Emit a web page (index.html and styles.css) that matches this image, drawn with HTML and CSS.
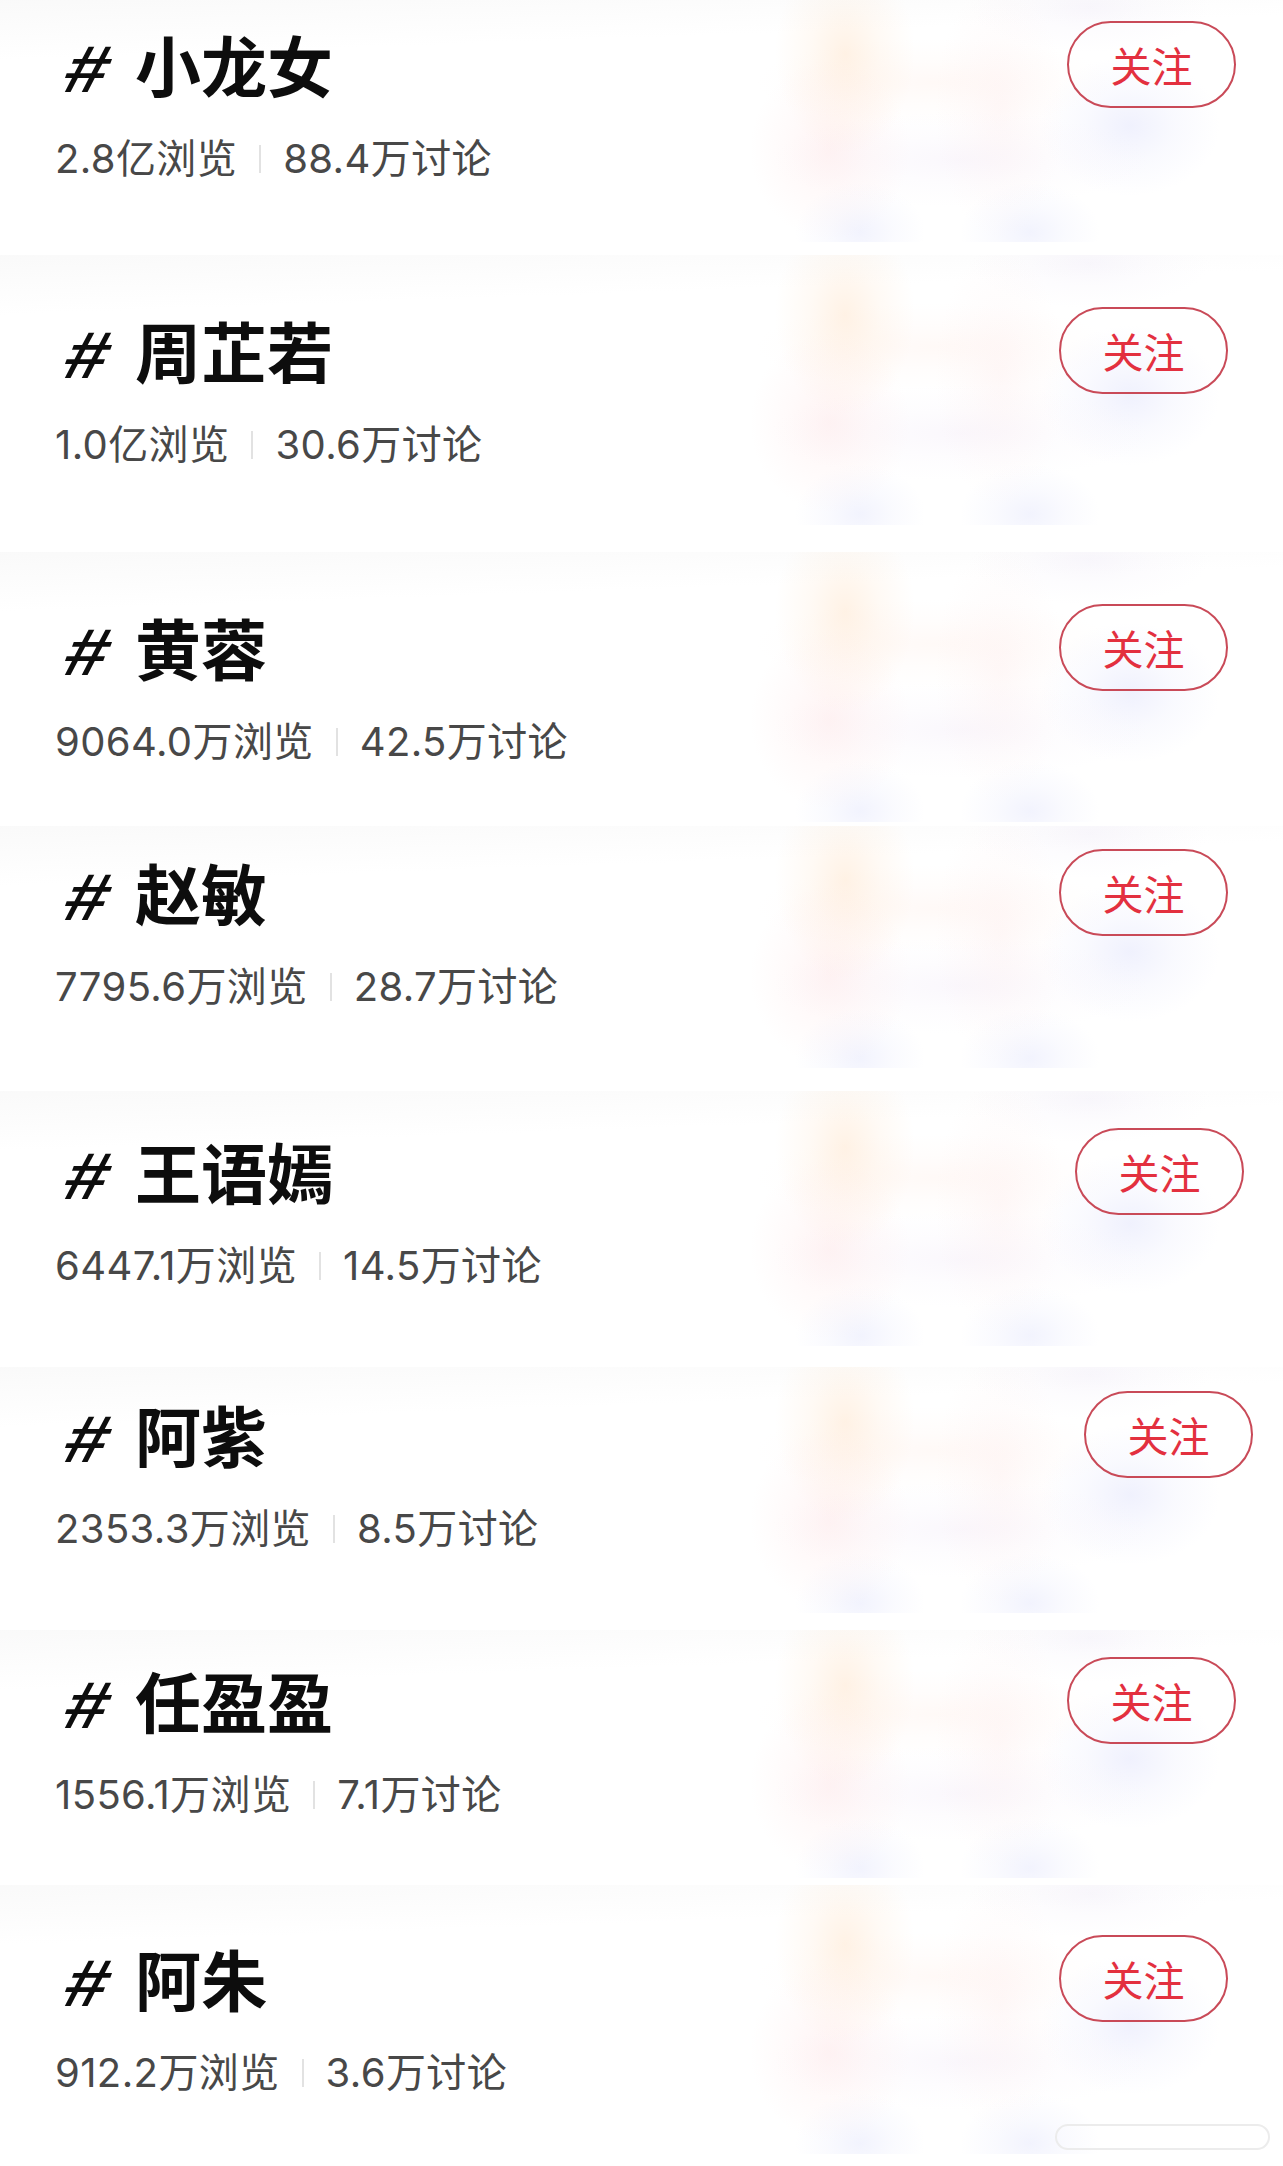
FILE: index.html
```html
<!DOCTYPE html>
<html lang="zh-CN">
<head>
<meta charset="utf-8">
<title>话题列表</title>
<link rel="stylesheet" href="styles.css">
</head>
<body>
<main class="list">
  <section class="topic t1">
    <div class="head">
      <h2 class="title"><span class="hash">#</span>小龙女</h2>
      <button class="follow">关注</button>
    </div>
    <p class="stats"><span>2.8亿浏览</span><i class="sep"></i><span>88.4万讨论</span></p>
  </section>
  <section class="topic t2">
    <div class="head">
      <h2 class="title"><span class="hash">#</span>周芷若</h2>
      <button class="follow">关注</button>
    </div>
    <p class="stats"><span>1.0亿浏览</span><i class="sep"></i><span>30.6万讨论</span></p>
  </section>
  <section class="topic t3">
    <div class="head">
      <h2 class="title"><span class="hash">#</span>黄蓉</h2>
      <button class="follow">关注</button>
    </div>
    <p class="stats"><span>9064.0万浏览</span><i class="sep"></i><span>42.5万讨论</span></p>
  </section>
  <section class="topic t4">
    <div class="head">
      <h2 class="title"><span class="hash">#</span>赵敏</h2>
      <button class="follow">关注</button>
    </div>
    <p class="stats"><span>7795.6万浏览</span><i class="sep"></i><span>28.7万讨论</span></p>
  </section>
  <section class="topic t5">
    <div class="head">
      <h2 class="title"><span class="hash">#</span>王语嫣</h2>
      <button class="follow">关注</button>
    </div>
    <p class="stats"><span>6447.1万浏览</span><i class="sep"></i><span>14.5万讨论</span></p>
  </section>
  <section class="topic t6">
    <div class="head">
      <h2 class="title"><span class="hash">#</span>阿紫</h2>
      <button class="follow">关注</button>
    </div>
    <p class="stats"><span>2353.3万浏览</span><i class="sep"></i><span>8.5万讨论</span></p>
  </section>
  <section class="topic t7">
    <div class="head">
      <h2 class="title"><span class="hash">#</span>任盈盈</h2>
      <button class="follow">关注</button>
    </div>
    <p class="stats"><span>1556.1万浏览</span><i class="sep"></i><span>7.1万讨论</span></p>
  </section>
  <section class="topic t8">
    <div class="head">
      <h2 class="title"><span class="hash">#</span>阿朱</h2>
      <button class="follow">关注</button>
    </div>
    <p class="stats"><span>912.2万浏览</span><i class="sep"></i><span>3.6万讨论</span></p>
    <div class="tail"><span class="pill"></span></div>
  </section>
</main>
</body>
</html>
```
FILE: styles.css
```css
* { box-sizing: border-box; }

html, body {
  margin: 0;
  padding: 0;
  background: #ffffff;
}

body {
  width: 1283px;
  height: 2166px;
  overflow: hidden;
  font-family: Inter, "Noto Sans CJK SC", sans-serif;
}

.list {
  display: flex;
  flex-direction: column;
  padding-bottom: 12px;
}

/* each topic card carries a faint, blurred "#" artwork on its right side */
.topic {
  display: flex;
  flex-direction: column;
  padding-left: 55px;
  padding-right: 47px;
  background-color: #ffffff;
  background-image:
    radial-gradient(ellipse 70px 100px at 845px 22%, rgba(255, 212, 170, 0.30), rgba(255, 212, 170, 0.12) 50%, rgba(255, 212, 170, 0) 100%),
    radial-gradient(ellipse 80px 90px at 830px 62%, rgba(255, 205, 205, 0.24), rgba(255, 205, 205, 0.10) 50%, rgba(255, 205, 205, 0) 100%),
    radial-gradient(ellipse 65px 130px at 1000px 45%, rgba(252, 226, 226, 0.24), rgba(252, 226, 226, 0.10) 50%, rgba(252, 226, 226, 0) 100%),
    radial-gradient(ellipse 180px 44px at 935px 34%, rgba(255, 226, 214, 0.20), rgba(255, 226, 214, 0.08) 50%, rgba(255, 226, 214, 0) 100%),
    radial-gradient(ellipse 190px 48px at 960px 66%, rgba(238, 228, 246, 0.28), rgba(238, 228, 246, 0.10) 50%, rgba(238, 228, 246, 0) 100%),
    radial-gradient(ellipse 90px 70px at 1130px 52%, rgba(208, 212, 250, 0.32), rgba(208, 212, 250, 0.12) 50%, rgba(208, 212, 250, 0) 100%),
    radial-gradient(ellipse 65px 50px at 860px 96%, rgba(212, 216, 250, 0.30), rgba(212, 216, 250, 0.12) 50%, rgba(212, 216, 250, 0) 100%),
    radial-gradient(ellipse 70px 50px at 1030px 96%, rgba(212, 216, 250, 0.30), rgba(212, 216, 250, 0.12) 50%, rgba(212, 216, 250, 0) 100%),
    radial-gradient(ellipse 120px 45px at 1090px 3%, rgba(236, 230, 246, 0.32), rgba(236, 230, 246, 0.12) 50%, rgba(236, 230, 246, 0) 100%),
    linear-gradient(178deg, rgba(243, 243, 243, 0.45) 0, rgba(255, 255, 255, 0) 60px);
  background-repeat: no-repeat;
}

.t1 { height: 242px; padding-top: 21px; margin-bottom: 13px; }
.t2 { height: 270px; padding-top: 52px; margin-bottom: 27px; padding-right: 55px; }
.t3 { height: 270px; padding-top: 52px; margin-bottom: 4px; padding-right: 55px; }
.t4 { height: 242px; padding-top: 23px; margin-bottom: 23px; padding-right: 55px; }
.t5 { height: 255px; padding-top: 37px; margin-bottom: 21px; padding-right: 39px; }
.t6 { height: 246px; padding-top: 24px; margin-bottom: 17px; padding-right: 30px; }
.t7 { height: 248px; padding-top: 27px; margin-bottom: 7px; }
.t8 { height: 269px; padding-top: 50px; padding-right: 55px; }

.head {
  display: flex;
  align-items: center;
  justify-content: space-between;
  height: 87px;
}

.title {
  margin: 0;
  padding-left: 5px;
  font-family: "Noto Sans CJK SC", sans-serif;
  font-size: 66px;
  font-weight: 600;
  line-height: 87px;
  color: #0d0d0d;
}

.hash {
  display: inline-block;
  width: 75px;
  font-family: "Noto Sans CJK SC", sans-serif;
  font-weight: 500;
  font-size: 62px;
  transform: skewX(-20deg) scaleX(1.3);
  transform-origin: left 70%;
}

.follow {
  width: 169px;
  height: 87px;
  border: 2px solid #c94a58;
  border-radius: 44px;
  background: transparent;
  color: #e3303f;
  font-family: "Noto Sans CJK SC", sans-serif;
  font-size: 41px;
  font-weight: 400;
  line-height: 1;
  padding: 0;
}

.stats {
  display: flex;
  align-items: center;
  margin: 31px 0 0;
  height: 40px;
  font-size: 40px;
  line-height: 40px;
  letter-spacing: 0.4px;
  color: #484848;
}

.sep {
  display: block;
  width: 2px;
  height: 28px;
  margin: 0 22px;
  background: #e2e2e2;
}

.tail {
  display: flex;
  justify-content: flex-end;
  margin-top: 31px;
  margin-right: -42px;
}

.pill {
  display: block;
  width: 215px;
  height: 26px;
  border: 2px solid #ececec;
  border-radius: 13px;
}
```
